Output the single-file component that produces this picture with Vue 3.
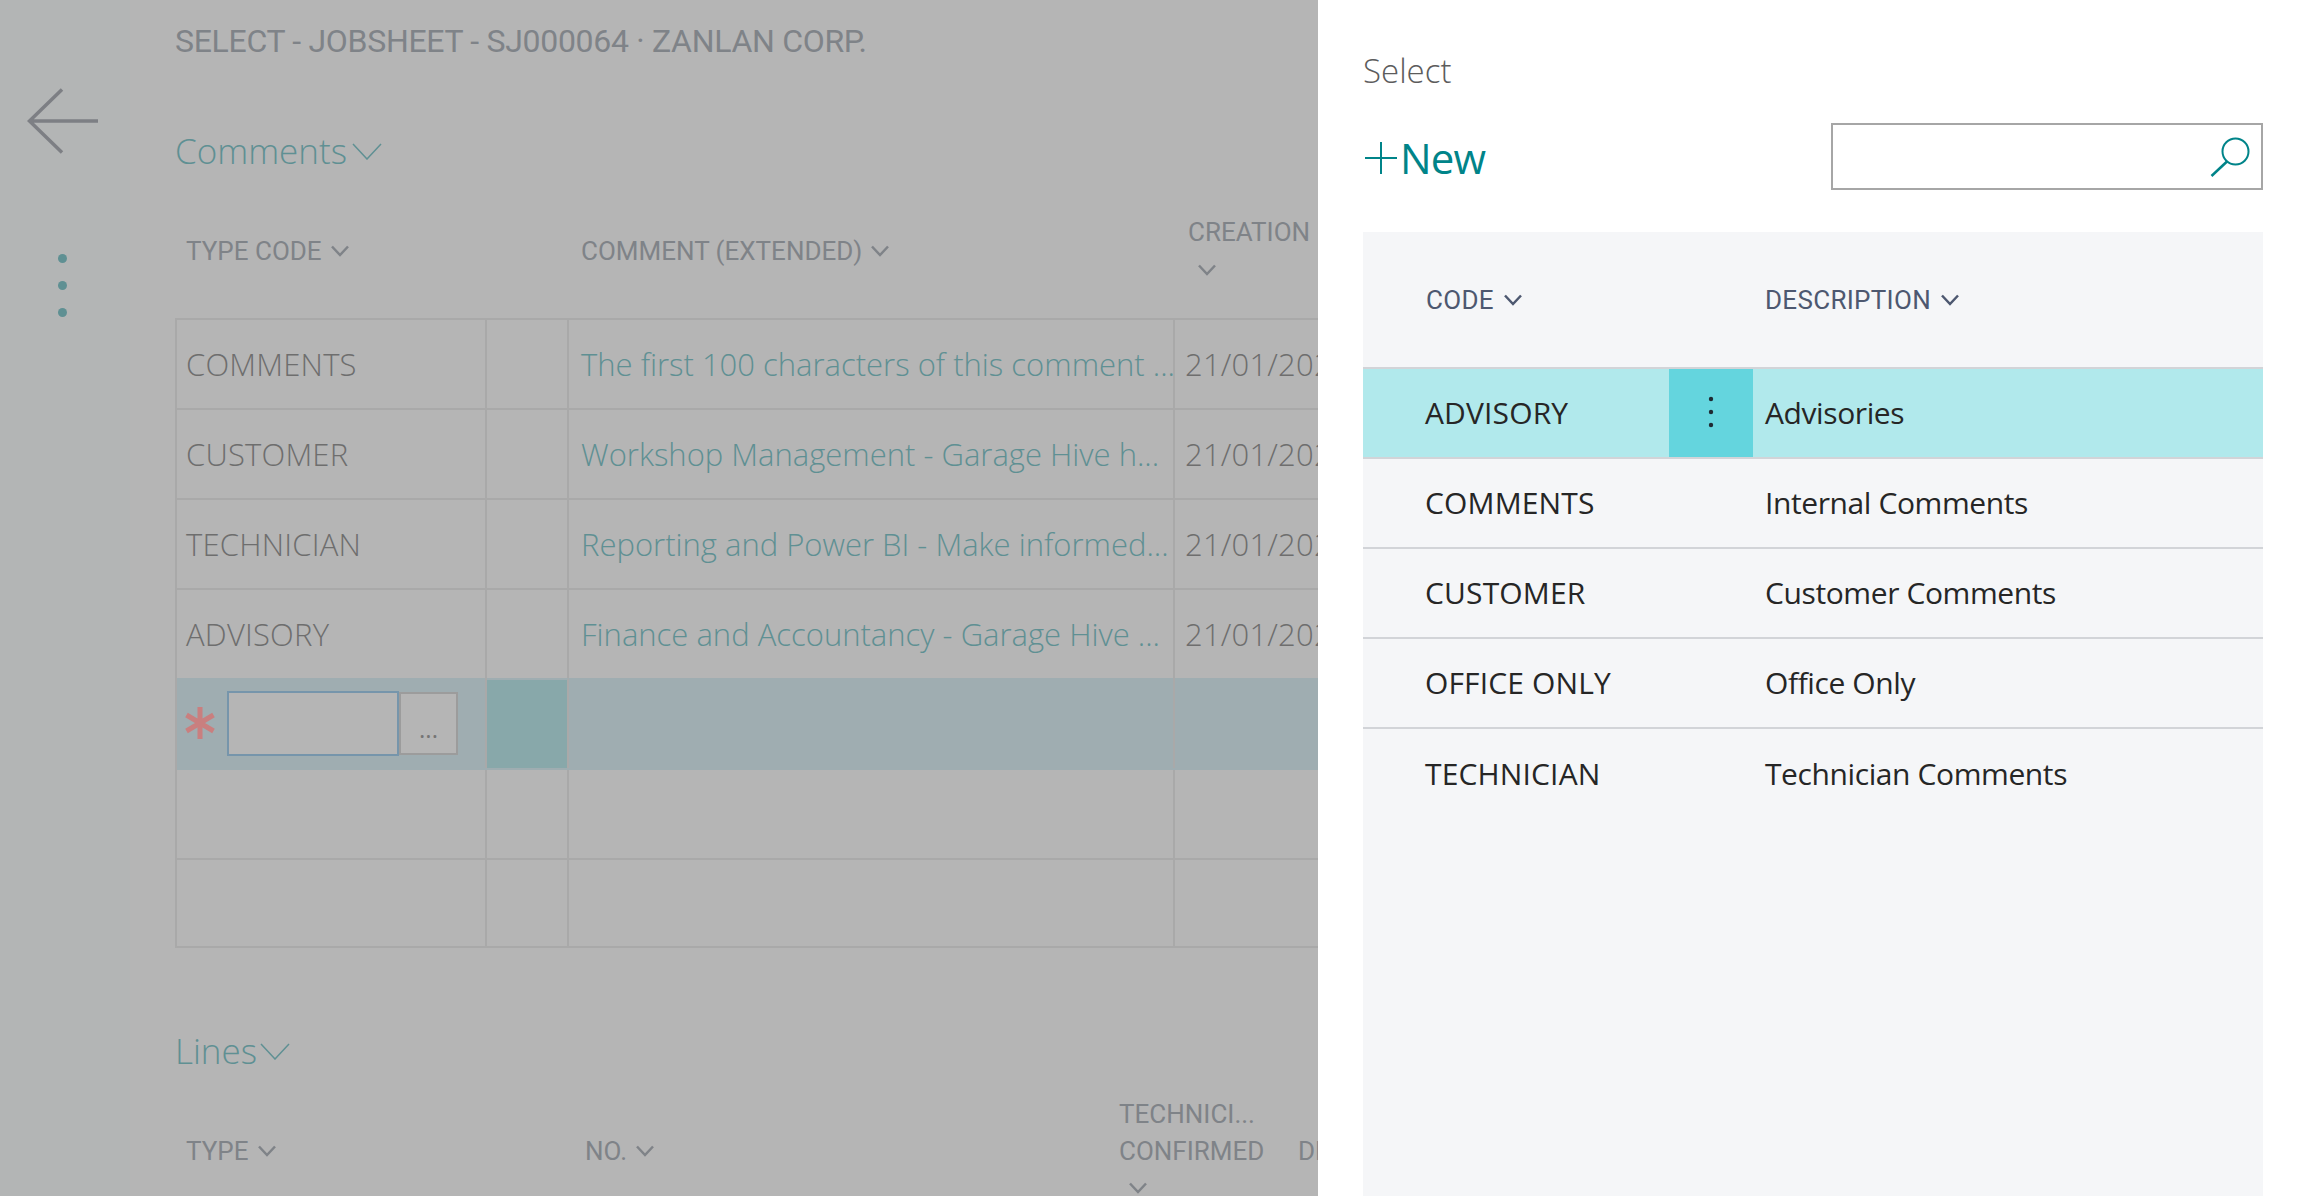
<script setup>
const rows = [
  { code: 'COMMENTS', text: 'The first 100 characters of this comment ...' },
  { code: 'CUSTOMER', text: 'Workshop Management - Garage Hive h...' },
  { code: 'TECHNICIAN', text: 'Reporting and Power BI - Make informed...' },
  { code: 'ADVISORY', text: 'Finance and Accountancy - Garage Hive ...' },
]
const picks = [
  { code: 'ADVISORY', desc: 'Advisories', active: true },
  { code: 'COMMENTS', desc: 'Internal Comments' },
  { code: 'CUSTOMER', desc: 'Customer Comments' },
  { code: 'OFFICE ONLY', desc: 'Office Only' },
  { code: 'TECHNICIAN', desc: 'Technician Comments' },
]
</script>

<template>
  <div class="screen">
    <div class="backdrop">
      <aside class="rail">
        <svg class="back" width="72" height="66" viewBox="0 0 72 66" aria-hidden="true">
          <path d="M35 1.5 2.5 33 35 64.5M2.500 33H71" fill="none" stroke="#7d7f84" stroke-width="3.500" />
        </svg>
        <div class="dots"><i></i><i></i><i></i></div>
      </aside>

      <main class="page">
        <h1 class="title">SELECT - JOBSHEET - SJ000064 · ZANLAN CORP.</h1>

        <h2 class="section">
          Comments
          <svg width="30" height="17" viewBox="0 0 30 17" aria-hidden="true"><path d="M1 1 15 16 29 1" fill="none" stroke="#5f9093" stroke-width="1.500" /></svg>
        </h2>

        <div class="heads heads-comments">
          <span class="head">TYPE CODE <svg class="chev" viewBox="0 0 18 12" aria-hidden="true"><path d="M1 1.500 9 10l8-8.500" /></svg></span>
          <span class="head">COMMENT (EXTENDED) <svg class="chev" viewBox="0 0 18 12" aria-hidden="true"><path d="M1 1.500 9 10l8-8.500" /></svg></span>
          <span class="head head-stack"><span>CREATION</span><svg class="chev" viewBox="0 0 18 12" aria-hidden="true"><path d="M1 1.500 9 10l8-8.500" /></svg></span>
        </div>

        <div class="table">
          <div v-for="r in rows" :key="r.code" class="trow">
            <div class="tcell code">{{ r.code }}</div>
            <div class="tcell"></div>
            <div class="tcell link">{{ r.text }}</div>
            <div class="tcell date">21/01/2021</div>
          </div>
          <div class="trow trow-new">
            <div class="tcell entry">
              <svg class="star" width="30" height="32" viewBox="0 0 30 32" aria-hidden="true"><path d="M15 0v32M1.500 8l27 16M1.500 24l27-16" fill="none" stroke="#c97f7f" stroke-width="5" /></svg>
              <span class="input"></span>
              <span class="more">...</span>
            </div>
            <div class="tcell marker"></div>
            <div class="tcell"></div>
            <div class="tcell"></div>
          </div>
          <div v-for="n in 2" :key="n" class="trow">
            <div class="tcell"></div>
            <div class="tcell"></div>
            <div class="tcell"></div>
            <div class="tcell"></div>
          </div>
        </div>

        <h2 class="section section-lines">
          Lines
          <svg width="30" height="17" viewBox="0 0 30 17" aria-hidden="true"><path d="M1 1 15 16 29 1" fill="none" stroke="#5f9093" stroke-width="1.500" /></svg>
        </h2>

        <div class="heads heads-lines">
          <span class="head">TYPE <svg class="chev" viewBox="0 0 18 12" aria-hidden="true"><path d="M1 1.500 9 10l8-8.500" /></svg></span>
          <span class="head">NO. <svg class="chev" viewBox="0 0 18 12" aria-hidden="true"><path d="M1 1.500 9 10l8-8.500" /></svg></span>
          <span class="head head-stack head-tech"><span>TECHNICI...</span><span>CONFIRMED</span><svg class="chev" viewBox="0 0 18 12" aria-hidden="true"><path d="M1 1.500 9 10l8-8.500" /></svg></span>
          <span class="head">DESCRIPTION</span>
        </div>
      </main>
    </div>

    <section class="panel">
      <div class="panel-title">Select</div>
      <div class="panel-bar">
        <div class="new">
          <svg width="32" height="32" viewBox="0 0 32 32" aria-hidden="true"><path d="M16 0v32M0 16h32" stroke="#008489" stroke-width="2" fill="none" /></svg>
          <span>New</span>
        </div>
        <div class="search">
          <svg width="40" height="40" viewBox="0 0 40 40" aria-hidden="true"><circle cx="25.500" cy="14.500" r="13" fill="none" stroke="#008489" stroke-width="2" /><path d="M17 24.500 1.500 39" stroke="#008489" stroke-width="2.500" fill="none" /></svg>
        </div>
      </div>

      <div class="list">
        <div class="list-head">
          <span class="lhead lhead-code">CODE <svg class="chev chev-dark" viewBox="0 0 18 12" aria-hidden="true"><path d="M1 1.500 9 10l8-8.500" /></svg></span>
          <span class="lhead">DESCRIPTION <svg class="chev chev-dark" viewBox="0 0 18 12" aria-hidden="true"><path d="M1 1.500 9 10l8-8.500" /></svg></span>
        </div>
        <div v-for="p in picks" :key="p.code" class="lrow" :class="{ active: p.active }">
          <div class="lcode">{{ p.code }}</div>
          <div class="lmenu">
            <svg v-if="p.active" width="6" height="32" viewBox="0 0 6 32" aria-hidden="true"><circle cx="3" cy="3" r="2.200" /><circle cx="3" cy="16" r="2.200" /><circle cx="3" cy="29" r="2.200" /></svg>
          </div>
          <div class="ldesc">{{ p.desc }}</div>
        </div>
      </div>
    </section>
  </div>
</template>

<style>
html, body { margin: 0; padding: 0; background: #fff; }
</style>

<style scoped>
.screen {
  width: 2304px;
  height: 1196px;
  display: flex;
  overflow: hidden;
  font-family: "Open Sans", "Noto Sans", sans-serif;
}
.backdrop {
  width: 1318px;
  flex: none;
  display: flex;
  overflow: hidden;
  background: #b5b5b5;
}
.rail {
  width: 130px;
  flex: none;
  background: #b3b5b5;
  display: flex;
  flex-direction: column;
  align-items: flex-start;
  padding: 88px 0 0 27px;
  box-sizing: border-box;
}
.back { display: block; }
.dots {
  display: flex;
  flex-direction: column;
  gap: 18px;
  margin: 100px 0 0 31px;
}
.dots i {
  width: 9px;
  height: 9px;
  border-radius: 50%;
  background: #5f9093;
}
.page {
  flex: none;
  width: 1300px;
  padding-left: 45px;
  box-sizing: border-box;
}
.title {
  margin: 0;
  padding-top: 24px;
  font: 400 32px/34px Roboto, sans-serif;
  letter-spacing: -0.3px;
  color: #7f8388;
  white-space: nowrap;
}
.section {
  margin: 0;
  padding-top: 70px;
  display: flex;
  align-items: center;
  gap: 5px;
  font: 300 35px/46px "Open Sans", sans-serif;
  color: #5f9093;
}
.section-lines { padding-top: 80px; gap: 3px; }
.heads {
  display: grid;
  align-items: center;
  padding-left: 11px;
  white-space: nowrap;
}
.heads-comments { grid-template-columns: 395px 607px auto; margin-top: 10px; height: 134px; }
.heads-lines { grid-template-columns: 399px 534px 179px auto; margin-top: 20px; height: 114px; }
.head {
  font: 400 26px/37px Roboto, sans-serif;
  color: #7f8388;
  display: flex;
  align-items: center;
  gap: 9px;
}
.head-stack { flex-direction: column; align-items: flex-start; gap: 0; }
.head-stack .chev { margin: 12.500px 0 12.500px 10px; }
.chev {
  width: 18px;
  height: 12px;
  fill: none;
  stroke: #7f8388;
  stroke-width: 2.500;
  flex: none;
}
.chev-dark { stroke: #4d5870; }
.table {
  width: 1400px;
  border-top: 2px solid #a9a9a9;
  border-left: 2px solid #a9a9a9;
  border-bottom: 2px solid #a9a9a9;
  box-sizing: border-box;
}
.trow {
  display: grid;
  grid-template-columns: 310px 82px 606px 1fr;
  height: 90px;
  border-bottom: 2px solid #a9a9a9;
  box-sizing: border-box;
}
.trow:last-child { border-bottom: 0; height: 86px; }
.tcell {
  border-right: 2px solid #a9a9a9;
  display: flex;
  align-items: center;
  padding-left: 9px;
  font-size: 31px;
  font-weight: 300;
  white-space: nowrap;
  overflow: hidden;
  min-width: 0;
}
.code, .date { color: #6e6e6e; letter-spacing: 0.2px; }
.link { color: #5f9093; padding-left: 12px; }
.date { border-right: 0; padding-left: 10px; }
.trow-new {
  background: #9fadb1;
  margin-top: -2px;
  height: 92px;
  border-bottom-color: #9fadb1;
}
.marker { background: #88a8aa; padding: 0; border-top: 2px solid #9fadb1; }
.entry { padding-left: 8px; }
.star { flex: none; margin-right: 12px; }
.input {
  width: 172px;
  height: 65px;
  box-sizing: border-box;
  background: #b5b5b5;
  border: 2px solid #7695ab;
  flex: none;
}
.more {
  width: 59px;
  height: 63px;
  box-sizing: border-box;
  background: #b5b5b5;
  border: 2px solid #9c9c9c;
  color: #757575;
  font-size: 24px;
  font-weight: 400;
  line-height: 1;
  display: flex;
  align-items: flex-end;
  justify-content: center;
  padding-bottom: 12px;
  flex: none;
}
.panel {
  flex: 1;
  min-width: 0;
  background: #fff;
  padding: 0 41px 0 45px;
  box-sizing: border-box;
  display: flex;
  flex-direction: column;
}
.panel-title {
  padding-top: 49px;
  font: 300 33px/44px "Open Sans", sans-serif;
  color: #5c5c5c;
}
.panel-bar {
  margin-top: 30px;
  height: 67px;
  display: flex;
  justify-content: space-between;
  align-items: center;
}
.new {
  display: flex;
  align-items: center;
  gap: 3px;
  font: 400 42px/50px "Open Sans", sans-serif;
  letter-spacing: -0.8px;
  color: #008489;
  padding: 2px 0 0 2px;
}
.search {
  width: 432px;
  height: 67px;
  box-sizing: border-box;
  border: 2px solid #a6a6a6;
  display: flex;
  align-items: center;
  justify-content: flex-end;
  padding-right: 11px;
}
.list {
  margin-top: 42px;
  flex: 1;
  background: #f5f6f8;
}
.list-head {
  height: 137px;
  box-sizing: border-box;
  border-bottom: 2px solid #d2d4d8;
  display: grid;
  grid-template-columns: 339px 1fr;
  align-items: center;
  padding-left: 63px;
}
.lhead {
  font: 400 26px/30px Roboto, sans-serif;
  letter-spacing: 0.3px;
  color: #4d5870;
  display: flex;
  align-items: center;
  gap: 10px;
}
.lrow {
  display: grid;
  grid-template-columns: 306px 84px 1fr;
  height: 90px;
  font-size: 30px;
  font-weight: 400;
  color: #262626;
  border-bottom: 2px solid #d2d4d8;
  box-sizing: border-box;
}
.lrow:last-child { border-bottom: 0; }
.lrow > div { display: flex; align-items: center; padding-bottom: 2px; box-sizing: border-box; }
.lcode { padding-left: 62px; letter-spacing: 0.15px; }
.ldesc { padding-left: 12px; letter-spacing: -0.4px; }
.lmenu { justify-content: center; fill: #1f2a33; }
.lrow.active { background: #b1e9ec; }
.lrow.active .lmenu { background: #64d5de; }
</style>
